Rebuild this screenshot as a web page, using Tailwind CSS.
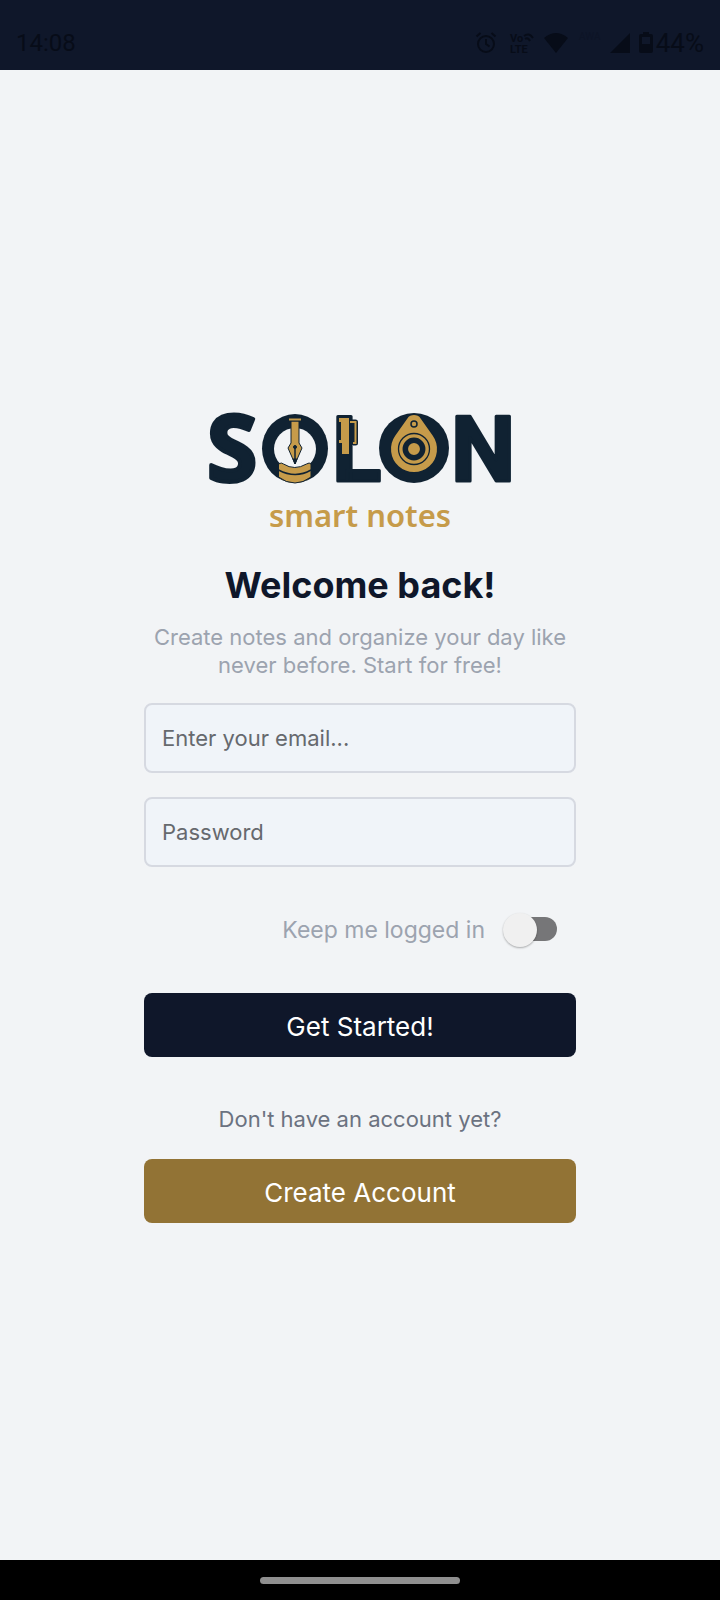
<!DOCTYPE html>
<html lang="en">
<head>
<meta charset="utf-8">
<meta name="viewport" content="width=device-width, initial-scale=1">
<title>Solon smart notes</title>
<script src="https://cdn.jsdelivr.net/npm/@tailwindcss/browser@4"></script>
</head>
<body class="flex min-h-screen flex-col bg-[#f2f4f6] font-['Inter',sans-serif]">
  <header class="flex h-[70px] items-center justify-between bg-[#0f172a] px-4 pt-4 text-[#070c18]">
    <time class="font-['Roboto',sans-serif] text-[24px] leading-6">14:08</time>
    <div class="flex items-center gap-2">
      <svg class="mr-1 size-6" viewBox="0 0 24 24" fill="none" stroke="currentColor" stroke-width="2" aria-hidden="true"><circle cx="12" cy="13" r="8"/><path d="M12 8v5l3.500 2.500M2.500 5.500l4-3.500M21.500 5.500l-4-3.500"/></svg>
      <svg class="h-6 w-6 overflow-visible" viewBox="0 0 24 24" aria-hidden="true"><text x="0" y="11" font-size="11" font-weight="700" font-family="Roboto, sans-serif" fill="currentColor">Vo</text><text x="0" y="22" font-size="11" font-weight="700" font-family="Roboto, sans-serif" fill="currentColor">LTE</text><path d="M14 5q5-4 9 2M15 8q3-2 5 2" fill="none" stroke="currentColor" stroke-width="2"/></svg>
      <svg class="h-6 w-7" viewBox="0 0 28 24" fill="currentColor" aria-hidden="true"><path d="M2 7q12-10 24 0L14 22z"/></svg>
      <span class="mb-3 w-6 text-center font-['Roboto',sans-serif] text-[10px] leading-3 text-[#0d1426]">AWA</span>
      <svg class="h-6 w-5" viewBox="0 0 20 24" fill="currentColor" aria-hidden="true"><path d="M20 2v20H0z"/></svg>
      <div class="flex items-center gap-0.5">
        <svg class="h-6 w-4" viewBox="0 0 16 24" aria-hidden="true"><path d="M5 1h6v2h2q2 0 2 2v15q0 2-2 2H3q-2 0-2-2V5q0-2 2-2h2zM4 6v7h8V6z" fill="currentColor" fill-rule="evenodd"/></svg>
        <span class="font-['Roboto',sans-serif] text-[26px] leading-6">44%</span>
      </div>
    </div>
  </header>

  <main class="flex flex-1 flex-col items-center justify-center pt-0.5">
    <form class="flex w-3/5 flex-col items-center">
      <svg class="h-[78px] w-[310px] overflow-visible" viewBox="0 0 310 78" role="img" aria-label="Solon">
        <g font-family="Roboto, sans-serif" font-size="91" font-weight="700" fill="#102232" stroke="#102232" stroke-width="3" stroke-linejoin="round">
          <text x="2" y="72" font-family="Noto Sans, sans-serif" stroke-width="4">S</text>
          <text x="127" y="72">L</text>
          <text x="246" y="72">N</text>
        </g>
        <!-- first O: ring with a fountain pen standing over stacked pages -->
        <ellipse cx="90" cy="39.500" rx="33" ry="34.500" fill="#102232"/>
        <circle cx="90" cy="40" r="21" fill="#f2f4f6"/>
        <g fill="#c69b4a" stroke="#102232" stroke-width="1" stroke-linejoin="round">
          <path d="M86 12h8v22l3 5-7 16-7-16 3-5z"/>
          <path d="M83.500 9h13v3h-13z"/>
          <path d="M90 39v15" stroke-width="1.500"/>
          <circle cx="90" cy="38" r="1.500" fill="#102232"/>
          <path d="M73.500 55q3-2 5 0 11 7 23 0 3-2 4.500 0v13q-8 6-16 6-9 0-16.500-6z"/>
          <path d="M73.500 61q17 9 32.500 0" fill="none" stroke-width="1.500"/>
          <path d="M90 55l-2-5h4z" fill="#102232"/>
        </g>
        <!-- pen clipped to the L -->
        <path d="M143 12h9v24h-9z" fill="#102232"/>
        <path d="M145 13h5.500v21H148" fill="none" stroke="#102232" stroke-width="5" stroke-linejoin="round"/>
        <path d="M145 13h5.500v21H148" fill="none" stroke="#c69b4a" stroke-width="2"/>
        <path d="M134 9h10v36h-7V34h-3v-3h2V13h-2z" fill="#c69b4a"/>
        <!-- second O: disc with a drop-shaped tag -->
        <circle cx="209" cy="39" r="35" fill="#102232"/>
        <path d="M202.400 9.400a8 8 0 0 1 13.200 0L227.800 26.800A23 23 0 1 1 190.200 26.800z" fill="#c69b4a"/>
        <g fill="none" stroke="#102232">
          <circle cx="209" cy="15" r="3" stroke-width="1.500"/>
          <circle cx="209" cy="40" r="15.500" stroke-width="1.300"/>
          <circle cx="209" cy="40" r="8.700" stroke-width="5.500"/>
        </g>
      </svg>
      <p class="font-['Noto_Sans',sans-serif] text-[31px] leading-14 font-semibold text-[#c69b4a]">smart notes</p>
      <h1 class="mt-5 text-[36px] leading-11 font-bold whitespace-nowrap text-[#0f172a]">Welcome back!</h1>
      <p class="mt-4 text-center text-[22px] leading-7 text-[#9ca3af]">Create notes and organize your day like never before. Start for free!</p>
      <input type="email" aria-label="Email" placeholder="Enter your email..." class="mt-6 h-[70px] w-full rounded-lg border-2 border-[#d6d9e1] bg-[#f0f4f9] px-4 text-[22px] text-[#0f172a] placeholder:text-[#66696e]">
      <input type="password" aria-label="Password" placeholder="Password" class="mt-6 h-[70px] w-full rounded-lg border-2 border-[#d6d9e1] bg-[#f0f4f9] px-4 text-[22px] text-[#0f172a] placeholder:text-[#66696e]">
      <div class="mt-10 flex h-[46px] w-full items-center justify-end gap-[18px] pr-[19px]">
        <label for="keep" class="text-[23px] leading-7 text-[#9ca3af]">Keep me logged in</label>
        <input id="keep" type="checkbox" role="switch" class="relative h-[34px] w-[54px] appearance-none before:absolute before:top-1 before:right-0 before:h-6 before:w-12 before:rounded-full before:bg-[#767678] after:absolute after:top-0 after:left-0 after:size-[34px] after:rounded-full after:bg-[#f0f0f0] after:shadow-[0_1px_2px_rgba(0,0,0,0.3)] checked:after:left-5">
      </div>
      <button type="submit" class="mt-10 h-16 w-full rounded-lg bg-[#0f172a] pt-0.5 text-[26px] text-white">Get Started!</button>
      <p class="mt-12 text-[22px] leading-7 text-[#6b7280]">Don't have an account yet?</p>
      <button type="button" class="mt-[26px] h-16 w-full rounded-lg bg-[#927335] pt-0.5 text-[26px] text-white">Create Account</button>
    </form>
  </main>

  <footer class="flex h-10 items-center justify-center bg-black">
    <div class="h-[7px] w-[200px] rounded-full bg-[#8f8f8f]"></div>
  </footer>
</body>
</html>
